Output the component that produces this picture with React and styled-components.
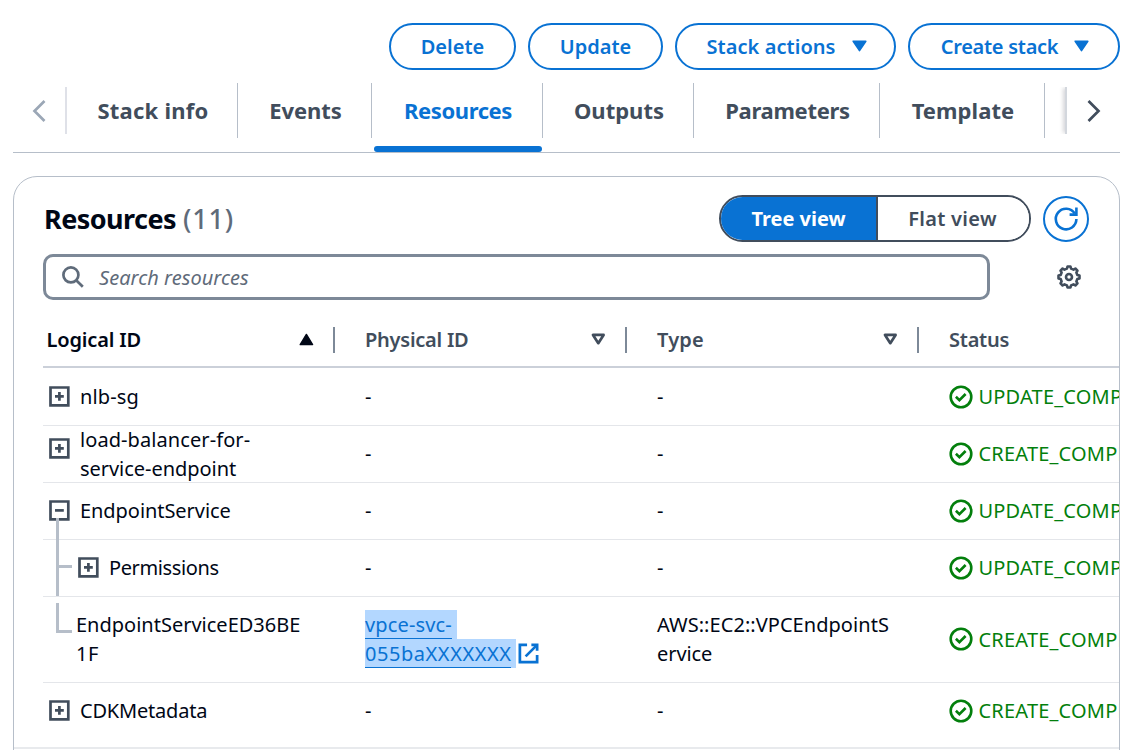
import React from 'react';
import styled, { createGlobalStyle } from 'styled-components';

const blue = '#0972d3';
const ink = '#000716';
const slate = '#414d5c';
const line = '#b6bec9';

const GlobalStyle = createGlobalStyle`
  *, *::before, *::after { box-sizing: border-box; }
  body {
    margin: 0;
    background: #fff;
    color: ${ink};
    font: 400 20px/29px "Noto Sans", "Open Sans", sans-serif;
    overflow: hidden;
  }
`;

const Label = styled.span`
  letter-spacing: ${(p) => p.$track || 0}px;
  white-space: nowrap;
`;

const Page = styled.div`
  width: 1133px;
  height: 750px;
  padding: 23px 13px 0;
  overflow: hidden;
`;

const Actions = styled.div`
  display: flex;
  justify-content: flex-end;
  gap: 12px;
`;

const Button = styled.button`
  display: flex;
  align-items: center;
  justify-content: center;
  gap: 16px;
  width: ${(p) => p.$width}px;
  height: 47px;
  padding: 0 0 1px ${(p) => (p.$menu ? 2 : 0)}px;
  border: 2px solid ${blue};
  border-radius: 24px;
  background: #fff;
  color: ${blue};
  font: 600 20px/29px "Noto Sans", sans-serif;
`;

const TabBar = styled.div`
  display: flex;
  align-items: flex-start;
  height: 83px;
  padding-top: 13px;
  border-bottom: 1px solid ${line};
`;

const Scroller = styled.div`
  display: flex;
  align-items: center;
  justify-content: center;
  width: 54px;
  height: 47px;
  margin-top: 4px;
  color: ${(p) => (p.$dim ? '#9ba7b6' : slate)};
  ${(p) => (p.$dim
    ? 'border-right: 2px solid #dfe1e8;'
    : 'margin-left: 20px; padding-left: 1px; border-left: 2px solid #d3d7dd; box-shadow: -3px 0 4px -1px rgba(0, 7, 22, 0.16); clip-path: inset(0 0 0 -8px);')}
`;

const Tab = styled.div`
  position: relative;
  display: flex;
  align-items: center;
  justify-content: center;
  width: ${(p) => p.$width}px;
  height: 55px;
  padding-left: 2px;
  border-right: 1px solid ${line};
  color: ${(p) => (p.$active ? blue : slate)};
  font-size: 22px;
  font-weight: 700;
`;

const ActiveBar = styled.span`
  position: absolute;
  left: 2px;
  right: 0;
  bottom: -14px;
  height: 6px;
  border-radius: 3px;
  background: ${blue};
`;

const Panel = styled.section`
  height: 600px;
  margin-top: 23px;
  border: 1px solid ${line};
  border-radius: 24px;
  overflow: hidden;
`;

const PanelHead = styled.header`
  display: flex;
  align-items: center;
  height: 47px;
  margin: 18px 30px 0 30px;
`;

const Title = styled.h2`
  flex: 1;
  margin: 0;
  font-size: 27px;
  line-height: 40px;
  font-weight: 700;
`;

const Count = styled(Label)`
  margin-left: 7px;
  color: #5f6b7a;
  font-weight: 500;
`;

const Toggle = styled.div`
  display: flex;
  width: 312px;
  height: 47px;
  margin-right: 12px;
  border: 2px solid ${slate};
  border-radius: 24px;
  overflow: hidden;
`;

const Segment = styled.div`
  flex: ${(p) => (p.$on ? '0 0 157px' : '1')};
  padding-right: ${(p) => (p.$on ? 0 : 2)}px;
  line-height: 44px;
  text-align: center;
  font-weight: ${(p) => (p.$on ? 700 : 600)};
  color: ${(p) => (p.$on ? '#fff' : slate)};
  background: ${(p) => (p.$on ? blue : '#fff')};
  border-right: ${(p) => (p.$on ? `2px solid ${slate}` : '0')};
`;

const RoundButton = styled.div`
  display: grid;
  place-items: center;
  width: 46px;
  height: 46px;
  border: 2px solid ${blue};
  border-radius: 50%;
  color: ${blue};
`;

const SearchRow = styled.div`
  display: flex;
  align-items: center;
  justify-content: space-between;
  margin: 12px 38px 0 29px;
`;

const SearchBox = styled.div`
  display: flex;
  align-items: center;
  gap: 15px;
  width: 947px;
  height: 46px;
  padding-left: 16px;
  border: 3px solid #7d8998;
  border-radius: 10px;
  color: #5f6b7a;
  font-style: italic;
`;

const Table = styled.div`
  margin-top: 16px;
`;

const Row = styled.div`
  display: grid;
  grid-template-columns: 292px 292px 292px 200px;
  grid-template-rows: 100%;
  height: ${(p) => p.$height}px;
  margin-left: 29px;
  padding-bottom: ${(p) => p.$bottom || 0}px;
  border-bottom: 1px solid #e4e6ea;
`;

const HeadRow = styled(Row)`
  height: 52px;
  border-bottom: 2px solid #cbd0d9;
`;

const LastRow = styled(Row)`
  margin-left: 0;
  padding-left: 29px;
  border-bottom: 2px solid #e8eaed;
`;

const HeadCell = styled.div`
  display: flex;
  align-items: center;
  justify-content: space-between;
  height: 26px;
  margin-top: 11px;
  padding: 0 19px 1px ${(p) => (p.$first ? 3.5 : 30)}px;
  border-right: ${(p) => (p.$last ? '0' : '2px solid #7d8998')};
  color: ${(p) => (p.$first ? ink : slate)};
  font-weight: 600;
`;

const Cell = styled.div`
  display: flex;
  align-items: center;
  padding-left: 30px;
`;

const NameCell = styled.div`
  position: relative;
  display: flex;
  align-items: center;
  gap: 10px;
  padding-left: ${(p) => p.$indent || 6}px;
`;

const Lines = styled.div`
  display: flex;
  flex-direction: column;
  align-items: flex-start;
`;

const BoxLift = styled.div`
  display: flex;
  padding-bottom: ${(p) => p.$lift || 0}px;
`;

const Branch = styled.span`
  position: absolute;
  left: 13px;
  top: ${(p) => p.$top}px;
  width: ${(p) => (p.$stub ? 16 : 3)}px;
  height: ${(p) => p.$height}px;
  background: ${line};
`;

const Status = styled.div`
  display: flex;
  align-items: center;
  gap: 6px;
  padding-left: 29.5px;
  color: #037f0c;
`;

const LinkLine = styled.span`
  display: flex;
  align-items: center;
  gap: 1px;
`;

const Selected = styled.span`
  display: block;
  height: 29px;
  padding-right: 5px;
  background: #b3d7ff;
  color: ${blue};
`;

const Anchor = styled.a`
  display: block;
  height: 29px;
  border-bottom: 1.5px solid ${blue};
  letter-spacing: ${(p) => p.$track || 0}px;
`;

const IconSvg = styled.svg`
  display: block;
  flex: none;
  overflow: visible;
  fill: none;
  stroke: currentColor;
  stroke-width: ${(p) => p.$stroke || 2.4};
`;

const Caret = () => (
  <IconSvg width="15" height="12" viewBox="0 0 15 12" $stroke={1.6}>
    <path d="M1.2 1.2h12.6L7.5 10.6z" fill="currentColor" strokeLinejoin="round" />
  </IconSvg>
);

const SortUp = () => (
  <IconSvg width="15" height="13" viewBox="0 0 15 13" $stroke={1.4}>
    <path d="M7.4 1.4L1.2 11.6h12.4z" fill="currentColor" strokeLinejoin="round" />
  </IconSvg>
);

const SortDown = () => (
  <IconSvg width="15" height="13" viewBox="0 0 15 13" $stroke={2.7}>
    <path d="M2 1.9h10.6L7.3 10.2z" strokeLinejoin="round" />
  </IconSvg>
);

const Chevron = ({ flip }) => (
  <IconSvg width="14" height="24" viewBox="0 0 14 24" $stroke={2.7}>
    <path d={flip ? 'M1.5 2l10 10-10 10' : 'M12.5 2l-10 10 10 10'} />
  </IconSvg>
);

const Refresh = () => (
  <IconSvg width="24" height="24" viewBox="0 0 24 24" $stroke={2.6}>
    <path d="M15.6 7.6h6.8V.4" />
    <path d="M22.4 12.1a10.3 10.3 0 1 1-1.6-5.6" />
  </IconSvg>
);

const Search = () => (
  <IconSvg width="22" height="22" viewBox="0 0 22 22" $stroke={2.7}>
    <circle cx="8.9" cy="8.9" r="7.5" />
    <path d="M14.2 14.2l6.6 6.6" />
  </IconSvg>
);

const gearPath = Array.from({ length: 32 }, (_, i) => {
  const step = [-14, -8, 8, 14][i % 4];
  const angle = ((Math.floor(i / 4) * 45 + step) * Math.PI) / 180;
  const radius = i % 4 === 1 || i % 4 === 2 ? 10.6 : 8.6;
  return `${(12 + radius * Math.sin(angle)).toFixed(2)} ${(12 - radius * Math.cos(angle)).toFixed(2)}`;
}).join('L');

const Gear = () => (
  <IconSvg width="24" height="24" viewBox="0 0 24 24" $stroke={2.6} color={slate}>
    <path d={`M${gearPath}z`} strokeLinejoin="round" />
    <circle cx="12" cy="12" r="3" />
  </IconSvg>
);

const Expander = ({ open }) => (
  <IconSvg width="21" height="21" viewBox="0 0 21 21" $stroke={2.7} color={slate}>
    <path d="M1.5 1.5h17.8v17.8H1.5z" />
    <path d={open ? 'M6 10.4h8.8' : 'M6 10.4h8.8M10.4 6v8.8'} />
  </IconSvg>
);

const Check = () => (
  <IconSvg width="24" height="24" viewBox="0 0 24 24" $stroke={2.6}>
    <circle cx="12" cy="12" r="10.3" />
    <path d="M6.9 11.8l3.5 3.4 6.2-6.2" />
  </IconSvg>
);

const External = () => (
  <IconSvg width="23" height="23" viewBox="0 0 16 16" $stroke={1.9} color={blue}>
    <path d="M10 2h4v4" />
    <path d="M6 10l8-8" />
    <path d="M14 9.05V14H2V2h5" />
  </IconSvg>
);

const Dash = () => <Cell>-</Cell>;

const Complete = ({ verb }) => (
  <Status>
    <Check />
    <Label $track={0.2}>{verb}_COMPLETE</Label>
  </Status>
);

const tabs = [
  { name: 'Stack info', width: 171, track: 0.25 },
  { name: 'Events', width: 134, track: -0.1 },
  { name: 'Resources', width: 171, track: -0.4, active: true },
  { name: 'Outputs', width: 151, track: 0 },
  { name: 'Parameters', width: 186, track: -0.3 },
  { name: 'Template', width: 165, track: 0.08 },
];

export default function App() {
  return (
    <Page>
      <GlobalStyle />
      <Actions>
        <Button $width={127}>Delete</Button>
        <Button $width={135}>Update</Button>
        <Button $width={221} $menu><Label $track={0.06}>Stack actions</Label><Caret /></Button>
        <Button $width={212} $menu><Label $track={-0.27}>Create stack</Label><Caret /></Button>
      </Actions>

      <TabBar>
        <Scroller $dim><Chevron /></Scroller>
        {tabs.map((t) => (
          <Tab key={t.name} $width={t.width} $active={t.active}>
            <Label $track={t.track}>{t.name}</Label>
            {t.active && <ActiveBar />}
          </Tab>
        ))}
        <Scroller><Chevron flip /></Scroller>
      </TabBar>

      <Panel>
        <PanelHead>
          <Title>
            <Label $track={-0.55}>Resources</Label>
            <Count $track={0.8}>(11)</Count>
          </Title>
          <Toggle>
            <Segment $on>Tree view</Segment>
            <Segment><Label $track={0.3}>Flat view</Label></Segment>
          </Toggle>
          <RoundButton><Refresh /></RoundButton>
        </PanelHead>

        <SearchRow>
          <SearchBox><Search /><Label $track={0.04}>Search resources</Label></SearchBox>
          <Gear />
        </SearchRow>

        <Table>
          <HeadRow>
            <HeadCell $first><Label $track={-0.16}>Logical ID</Label><SortUp /></HeadCell>
            <HeadCell><Label $track={-0.25}>Physical ID</Label><SortDown /></HeadCell>
            <HeadCell><Label $track={0.18}>Type</Label><SortDown /></HeadCell>
            <HeadCell $last><Label $track={-0.24}>Status</Label></HeadCell>
          </HeadRow>

          <Row $height={58}>
            <NameCell><Expander /><Label $track={0.15}>nlb-sg</Label></NameCell>
            <Dash /><Dash /><Complete verb="UPDATE" />
          </Row>
          <Row $height={57} $bottom={1}>
            <NameCell>
              <BoxLift $lift={10}><Expander /></BoxLift>
              <Lines>
                <Label $track={0.08}>load-balancer-for-</Label>
                <Label $track={-0.04}>service-endpoint</Label>
              </Lines>
            </NameCell>
            <Dash /><Dash /><Complete verb="CREATE" />
          </Row>
          <Row $height={57} $bottom={1}>
            <NameCell>
              <Expander open />
              <Label $track={-0.06}>EndpointService</Label>
              <Branch $top={35} $height={21} />
            </NameCell>
            <Dash /><Dash /><Complete verb="UPDATE" />
          </Row>
          <Row $height={57} $bottom={1}>
            <NameCell $indent={35}>
              <Branch $top={-1} $height={57} />
              <Branch $top={25} $height={3} $stub />
              <Expander />
              <Label $track={-0.38}>Permissions</Label>
            </NameCell>
            <Dash /><Dash /><Complete verb="UPDATE" />
          </Row>
          <Row $height={86} $bottom={1}>
            <NameCell $indent={33}>
              <Branch $top={6} $height={30} />
              <Branch $top={33} $height={3} $stub />
              <Lines>
                <Label>EndpointServiceED36BE</Label>
                <Label $track={0.5}>1F</Label>
              </Lines>
            </NameCell>
            <Cell>
              <Lines>
                <LinkLine><Selected><Anchor $track={0.14}>vpce-svc-</Anchor></Selected></LinkLine>
                <LinkLine><Selected><Anchor $track={0.55}>055baXXXXXXX</Anchor></Selected><External /></LinkLine>
              </Lines>
            </Cell>
            <Cell>
              <Lines>
                <Label $track={0.05}>AWS::EC2::VPCEndpointS</Label>
                <Label $track={-0.08}>ervice</Label>
              </Lines>
            </Cell>
            <Complete verb="CREATE" />
          </Row>
          <LastRow $height={66} $bottom={9}>
            <NameCell><Expander /><Label $track={-0.2}>CDKMetadata</Label></NameCell>
            <Dash /><Dash /><Complete verb="CREATE" />
          </LastRow>
        </Table>
      </Panel>
    </Page>
  );
}
